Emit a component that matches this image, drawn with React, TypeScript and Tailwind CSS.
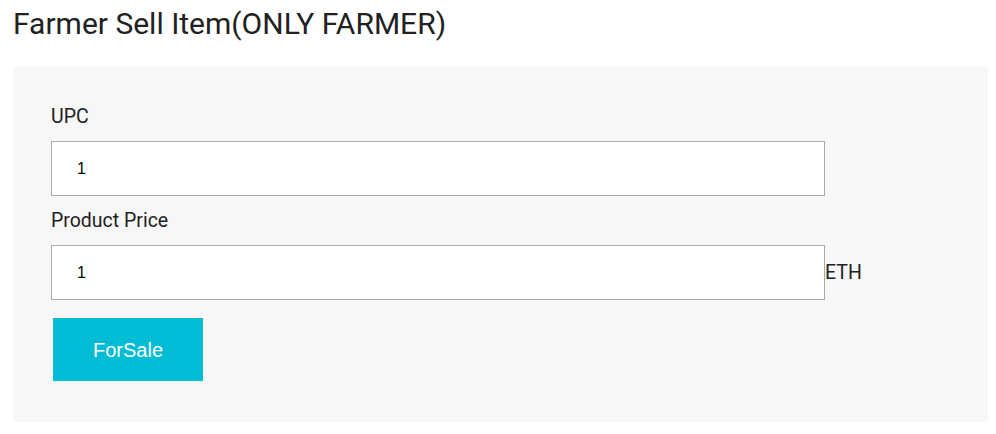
import { useState } from "react";

// ── Field label ──────────────────────────────────────────────────────────────

function FieldLabel({ children, className = "" }: { children: React.ReactNode; className?: string }) {
  return (
    <label className={"block text-[19.5px] leading-[23px] text-[#212121] font-['Roboto',sans-serif] " + className}>
      {children}
    </label>
  );
}

// ── Page ─────────────────────────────────────────────────────────────────────

export default function App() {
  const [upc, setUpc] = useState("1");
  const [price, setPrice] = useState("1");

  return (
    <div className="min-h-screen bg-white pt-[6px]">
      {/* Heading */}
      <h1 className="ml-[13px] text-[30px] leading-[35px] text-[#212121] font-['Roboto',sans-serif] font-normal">
        Farmer Sell Item(ONLY FARMER)
      </h1>

      {/* Form panel */}
      <div className="mt-[26px] ml-[13px] w-[975px] rounded bg-[#f7f7f7] pt-[38px] pl-[38px] pb-[41px]">
        <FieldLabel className="mb-[13px]">UPC</FieldLabel>
        <input
          type="text"
          value={upc}
          onChange={(e) => setUpc(e.target.value)}
          className="block w-[774px] h-[55px] border border-[#a9a9a9] bg-white pl-[25px] text-[16px] text-black font-['Liberation_Sans',Arial,sans-serif] outline-none"
        />

        <FieldLabel className="mt-[13px] mb-[13px]">Product Price</FieldLabel>
        <div className="flex items-center">
          <input
            type="text"
            value={price}
            onChange={(e) => setPrice(e.target.value)}
            className="block w-[774px] h-[55px] border border-[#a9a9a9] bg-white pl-[25px] text-[16px] text-black font-['Liberation_Sans',Arial,sans-serif] outline-none"
          />
          <span className="text-[19.5px] leading-[23px] text-[#212121] font-['Roboto',sans-serif]">ETH</span>
        </div>

        {/* Submit */}
        <button
          type="button"
          className="mt-[18px] ml-[2px] w-[150px] h-[63px] bg-[#00bcd4] text-white text-[20px] font-['Liberation_Sans',Arial,sans-serif]"
        >
          ForSale
        </button>
      </div>
    </div>
  );
}
